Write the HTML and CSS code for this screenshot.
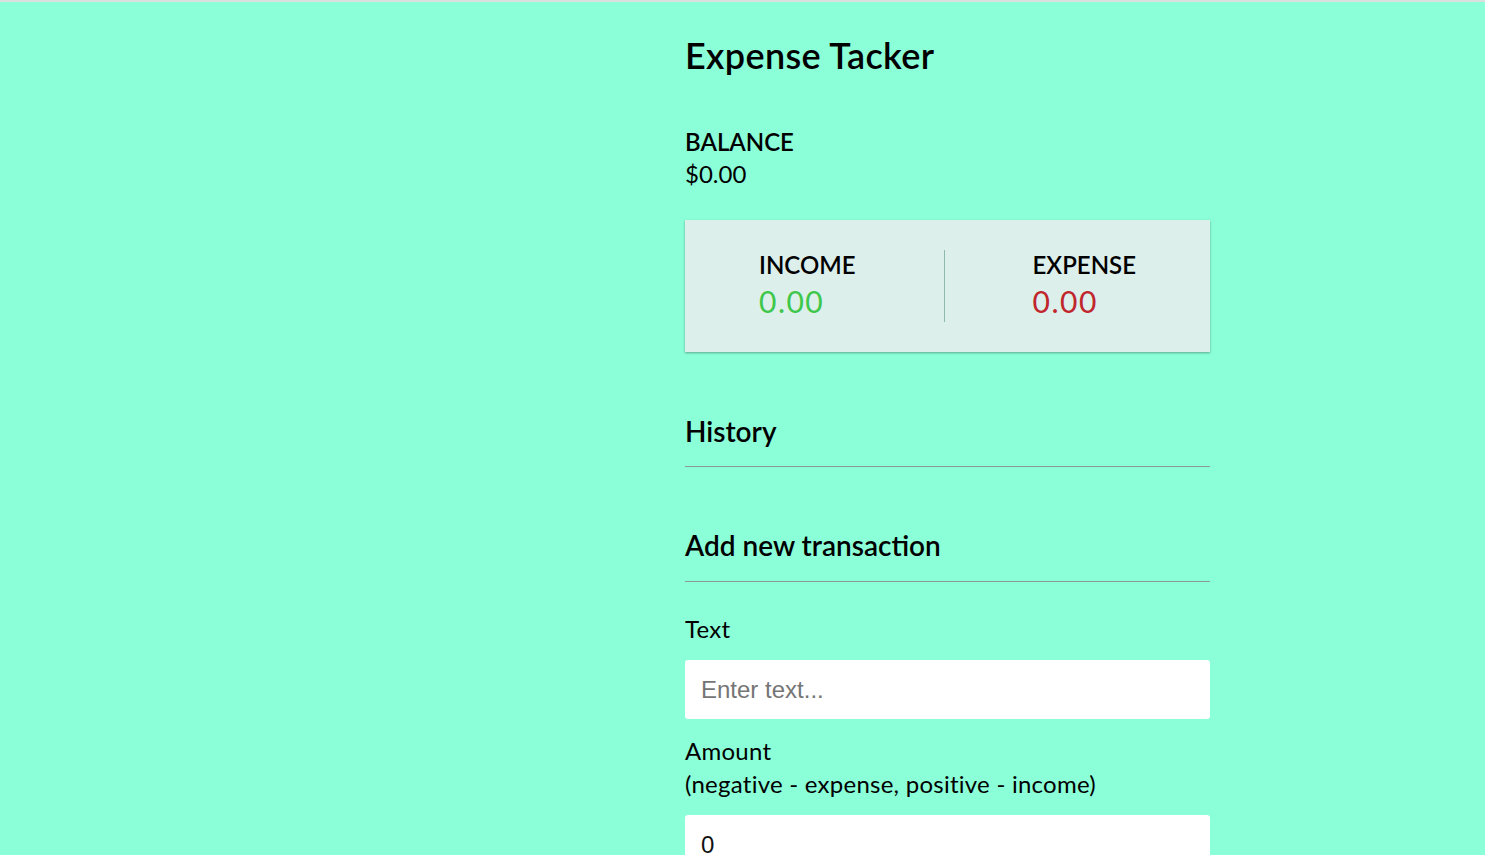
FILE: index.html
```html
<!DOCTYPE html>
<html lang="en">
<head>
<meta charset="UTF-8">
<title>Expense Tacker</title>
<link rel="stylesheet" href="styles.css">
</head>
<body>
  <main class="container">
    <h2 class="title">Expense Tacker</h2>

    <h4 class="label-upper balance-label">Balance</h4>
    <p class="balance">$0.00</p>

    <section class="inc-exp">
      <div class="inc-exp-item">
        <h4 class="label-upper">Income</h4>
        <p class="money plus">0.00</p>
      </div>
      <div class="divider"></div>
      <div class="inc-exp-item">
        <h4 class="label-upper">Expense</h4>
        <p class="money minus">0.00</p>
      </div>
    </section>

    <h3 class="section-title history">History</h3>
    <ul class="list"></ul>

    <h3 class="section-title add-title">Add new transaction</h3>
    <form class="form">
      <div class="form-control">
        <label for="text">Text</label>
        <input class="field" type="text" id="text" placeholder="Enter text...">
      </div>
      <div class="form-control">
        <label for="amount">Amount <br>(negative - expense, positive - income)</label>
        <input class="field" type="number" id="amount" value="0">
      </div>
      <button class="btn" type="button">Add transaction</button>
    </form>
  </main>
</body>
</html>
```
FILE: styles.css
```css
html, body {
  margin: 0;
  padding: 0;
}

body {
  background: #8bffd8;
  border-top: 2px solid #d9e0de;
  font-family: "Lato", "Noto Sans", sans-serif;
  font-size: 24px;
  line-height: 32.7px;
  color: #000;
}

.container {
  width: 525px;
  margin: 0 0 0 685px;
  padding-bottom: 45px;
}

.title {
  font-size: 36px;
  font-weight: 600;
  line-height: 49px;
  letter-spacing: 0.35px;
  margin: 29px 0 46px;
}

.label-upper {
  font-size: 24px;
  font-weight: 600;
  line-height: 32px;
  margin: 0;
  text-transform: uppercase;
}

.balance-label {
  line-height: 31px;
}

.balance {
  margin: 0;
  font-size: 24px;
  line-height: 33px;
}

.inc-exp {
  display: flex;
  justify-content: space-around;
  background: #dcefeb;
  box-shadow: 0 1px 3px rgba(0, 0, 0, 0.12), 0 1px 2px rgba(0, 0, 0, 0.24);
  padding: 29px 30px 32px;
  margin: 30px 0 0;
}

.divider {
  width: 1px;
  background: #8fb8ae;
  margin: 1px 0 -2px;
}

.money {
  font-size: 30px;
  line-height: 36px;
  letter-spacing: 1.5px;
  margin: 2px 0 1px;
}

.money.plus { color: #3ec74a; }
.money.minus { color: #c0262b; }

.section-title {
  font-size: 28px;
  font-weight: 600;
  line-height: 38px;
  margin: 59px 0 15px;
  padding-bottom: 16px;
  border-bottom: 1px solid #8a9a94;
}

.history {
  margin-top: 60px;
}

.add-title {
  padding-bottom: 17px;
}

.list {
  list-style: none;
  padding: 0;
  margin: 0;
}

.form-control {
  display: flex;
  flex-direction: column;
}

.form-control label {
  margin: 15px 0;
  line-height: 33px;
  letter-spacing: 0.25px;
}

.field {
  box-sizing: border-box;
  width: 100%;
  height: 59px;
  border: none;
  border-radius: 3px;
  padding: 0 16px;
  background: #fff;
  font-family: "Liberation Sans", Arial, sans-serif;
  font-size: 24px;
  color: #111;
  outline: none;
}

.field::placeholder {
  color: #757575;
}

.btn {
  display: block;
  width: 100%;
  margin: 15px 0 45px;
  padding: 15px;
  border: none;
  background: #9c88ff;
  color: #fff;
  font-family: inherit;
  font-size: 24px;
  box-shadow: 0 1px 3px rgba(0, 0, 0, 0.12), 0 1px 2px rgba(0, 0, 0, 0.24);
}
```
